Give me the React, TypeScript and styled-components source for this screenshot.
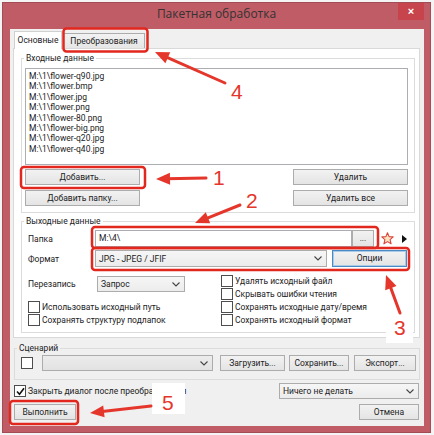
import React from 'react';
import styled, { createGlobalStyle } from 'styled-components';

const GlobalStyle = createGlobalStyle`
  html, body { margin: 0; padding: 0; background: #f4f4f4; }
  body {
    font-family: Roboto, "Liberation Sans", Arial, sans-serif;
    font-size: 8.5px;
    color: #222;
  }
  * { box-sizing: border-box; }
`;

const Screen = styled.div`
  position: relative;
  width: 434px;
  height: 435px;
  overflow: hidden;
  padding: 2px 0 0 2px;
`;

const Window = styled.div`
  width: 429px;
  height: 431px;
  background: #c05c66;
  border: 1px solid #a44c55;
  display: flex;
  flex-direction: column;
`;

const TitleBar = styled.div`
  height: 26px;
  display: grid;
  grid-template-columns: 1fr auto 1fr;
  align-items: start;
`;

const Title = styled.div`
  grid-column: 2;
  padding-top: 3px;
  font-size: 12px;
  line-height: 15px;
  color: #333;
  font-family: "Open Sans", "Noto Sans", sans-serif;
`;

const CloseButton = styled.div`
  grid-column: 3;
  justify-self: end;
  margin-right: 6px;
  width: 26px;
  height: 17px;
  background: #c7444d;
  color: #fff;
  font: bold 11px/16px "Liberation Sans", Arial, sans-serif;
  text-align: center;
`;

const Client = styled.div`
  flex: 1;
  margin: 0 6px 6px 7px;
  background: #f0f0f0;
  display: flex;
  flex-direction: column;
`;

const TabStrip = styled.div`
  height: 19px;
  display: flex;
  align-items: flex-end;
  padding-left: 4px;
`;

const Tab = styled.div<{ $active?: boolean; $width: number }>`
  width: ${p => p.$width}px;
  height: ${p => (p.$active ? 18 : 15)}px;
  margin-bottom: ${p => (p.$active ? -1 : 0)}px;
  margin-left: ${p => (p.$active ? 0 : 1)}px;
  position: relative;
  z-index: ${p => (p.$active ? 1 : 0)};
  border: 1px solid ${p => (p.$active ? '#d0d0d0' : '#acacac')};
  border-bottom: none;
  background: ${p => (p.$active ? '#fff' : 'linear-gradient(#f2f2f2, #e6e6e6)')};
  text-align: center;
  line-height: ${p => (p.$active ? 16 : 14)}px;
  white-space: nowrap;
`;

const TabPanel = styled.div`
  height: 290px;
  margin: 0 4px 0 3px;
  border: 1px solid #d9d9d9;
  background: #fff;
  padding: 3px 4px 0 7px;
`;

const Group = styled.fieldset<{ $gap?: number; $side?: number }>`
  margin: ${p => p.$gap ?? 0}px ${p => p.$side ?? 0}px 0;
  padding: 0;
  min-width: 0;
  border: 1px solid #dcdcdc;
`;

const GroupTitle = styled.legend`
  margin-left: 2px;
  padding: 0 2px;
  line-height: 12px;
`;

const GroupBody = styled.div<{ $pad: string }>`
  padding: ${p => p.$pad};
`;

const ListBox = styled.div`
  height: 97px;
  border: 1px solid #abadb3;
  padding: 2px 3px;
  line-height: 10.4px;
`;

const ButtonsRow = styled.div`
  margin-top: 4px;
  display: flex;
  justify-content: space-between;
`;

const ButtonColumn = styled.div`
  display: flex;
  flex-direction: column;
  gap: 5px;
`;

const Button = styled.div<{ $width: number; $primary?: boolean; $height?: number; $before?: number }>`
  width: ${p => p.$width}px;
  height: ${p => p.$height ?? 16}px;
  margin-left: ${p => p.$before ?? 0}px;
  flex: none;
  border: 1px solid ${p => (p.$primary ? '#4a8ac4' : '#acacac')};
  box-shadow: ${p => (p.$primary ? 'inset 0 0 0 1px #a9cbe8' : 'none')};
  background: linear-gradient(#f2f2f2, #e4e4e4);
  text-align: center;
  line-height: ${p => (p.$height ?? 16) - 2}px;
  white-space: nowrap;
`;

const FieldRow = styled.div<{ $top?: number }>`
  height: 17px;
  margin-top: ${p => p.$top ?? 0}px;
  display: flex;
  align-items: center;
`;

const FieldLabel = styled.div<{ $width: number }>`
  width: ${p => p.$width}px;
  flex: none;
`;

const TextInput = styled.div<{ $width: number }>`
  width: ${p => p.$width}px;
  height: 17px;
  border: 1px solid #abadb3;
  background: #fff;
  padding-left: 3px;
  line-height: 15px;
`;

const SelectBox = styled.div<{ $width: number; $height?: number; $muted?: boolean; $before?: number }>`
  width: ${p => p.$width}px;
  height: ${p => p.$height ?? 16}px;
  margin-left: ${p => p.$before ?? 0}px;
  flex: none;
  border: 1px solid #acacac;
  background: ${p => (p.$muted ? 'linear-gradient(#ececec, #e2e2e2)' : 'linear-gradient(#f6f6f6, #ececec)')};
  display: flex;
  align-items: center;
  justify-content: space-between;
  padding: 0 4px 0 3px;
  white-space: nowrap;
`;

const StarSlot = styled.div`
  margin-left: 7px;
  width: 13px;
  height: 13px;
  display: flex;
`;

const MenuArrow = styled.div`
  margin-left: auto;
  width: 0;
  height: 0;
  border-top: 4px solid transparent;
  border-bottom: 4px solid transparent;
  border-left: 5px solid #111;
  margin-right: 1px;
`;

const OptionsArea = styled.div`
  margin-top: 7px;
  display: flex;
`;

const OptionsColumn = styled.div<{ $width?: number }>`
  width: ${p => (p.$width ? `${p.$width}px` : 'auto')};
  flex: ${p => (p.$width ? 'none' : '1')};
  display: flex;
  flex-direction: column;
`;

const OverwriteRow = styled.div`
  height: 26px;
  display: flex;
  align-items: flex-start;
  padding-top: 2px;
`;

const OverwriteLabel = styled.div`
  width: 69px;
  line-height: 16px;
`;

const CheckRow = styled.div`
  height: 13px;
  display: flex;
  align-items: center;
  white-space: nowrap;
`;

const Box = styled.div`
  width: 12px;
  height: 12px;
  flex: none;
  border: 1px solid #4d4d4d;
  background: #fff;
  margin-right: 2px;
  display: flex;
  align-items: center;
  justify-content: center;
`;

const ScenarioRow = styled.div`
  height: 16px;
  display: flex;
  align-items: center;
`;

const FooterRow = styled.div<{ $top: number }>`
  height: 16px;
  margin-top: ${p => p.$top}px;
  padding: 0 5px 0 4px;
  display: flex;
  align-items: center;
  justify-content: space-between;
`;

const Overlay = styled.svg`
  position: absolute;
  left: 0;
  top: 0;
  pointer-events: none;
`;

const Mark = styled.text`
  font-family: "Liberation Sans", Arial, sans-serif;
  font-size: 21px;
  fill: #e5362b;
`;

const Chevron = () => (
  <svg width="8" height="5" viewBox="0 0 8 5">
    <path d="M0.5 0.5 L4 4 L7.5 0.5" fill="none" stroke="#444" strokeWidth="1.1" />
  </svg>
);

const Star = () => (
  <svg width="13" height="13" viewBox="0 0 13 13">
    <path
      d="M6.5 0.8 L8.1 4.6 L12.2 4.9 L9.1 7.6 L10.1 11.8 L6.5 9.6 L2.9 11.8 L3.9 7.6 L0.8 4.9 L4.9 4.6 Z"
      fill="#fde3c2"
      stroke="#d8453c"
      strokeWidth="1.1"
      strokeLinejoin="round"
    />
  </svg>
);

const Check = ({ checked, label }: { checked?: boolean; label: string }) => (
  <CheckRow>
    <Box>
      {checked && (
        <svg width="9" height="9" viewBox="0 0 9 9">
          <path d="M1 4.5 L3.5 7.2 L8 1.2" fill="none" stroke="#111" strokeWidth="1.6" />
        </svg>
      )}
    </Box>
    {label}
  </CheckRow>
);

const files = [
  'M:\\1\\flower-q90.jpg',
  'M:\\1\\flower.bmp',
  'M:\\1\\flower.jpg',
  'M:\\1\\flower.png',
  'M:\\1\\flower-80.png',
  'M:\\1\\flower-big.png',
  'M:\\1\\flower-q20.jpg',
  'M:\\1\\flower-q40.jpg',
];

type Arrow = { tip: [number, number]; tail: [number, number] };

const arrows: Arrow[] = [
  { tip: [155, 52], tail: [225, 83] },
  { tip: [156, 179], tail: [206, 178] },
  { tip: [195, 223], tail: [240, 205] },
  { tip: [386, 275], tail: [400, 313] },
  { tip: [90, 413], tail: [151, 406] },
];

const frames = [
  { x: 63.5, y: 28.5, w: 84, h: 23 },
  { x: 21, y: 167, w: 124, h: 21 },
  { x: 92, y: 227, w: 286, h: 21 },
  { x: 92, y: 248, w: 317, h: 22 },
  { x: 10, y: 401, w: 68, h: 23 },
];

function arrowHead({ tip, tail }: Arrow) {
  const dx = tip[0] - tail[0];
  const dy = tip[1] - tail[1];
  const len = Math.hypot(dx, dy);
  const ux = dx / len;
  const uy = dy / len;
  const bx = tip[0] - ux * 14;
  const by = tip[1] - uy * 14;
  const px = -uy * 6;
  const py = ux * 6;
  return {
    points: `${tip[0]},${tip[1]} ${bx + px},${by + py} ${bx - px},${by - py}`,
    neck: [tip[0] - ux * 10, tip[1] - uy * 10],
  };
}

export default function App() {
  return (
    <Screen>
      <GlobalStyle />
      <Window>
        <TitleBar>
          <Title>Пакетная обработка</Title>
          <CloseButton>×</CloseButton>
        </TitleBar>
        <Client>
          <TabStrip>
            <Tab $active $width={48}>Основные</Tab>
            <Tab $width={82}>Преобразования</Tab>
          </TabStrip>
          <TabPanel>
            <Group>
              <GroupTitle>Входные данные</GroupTitle>
              <GroupBody $pad="4px 6px 6px 3px">
                <ListBox>
                  {files.map(f => (
                    <div key={f}>{f}</div>
                  ))}
                </ListBox>
                <ButtonsRow>
                  <ButtonColumn>
                    <Button $width={115}>Добавить...</Button>
                    <Button $width={115}>Добавить папку...</Button>
                  </ButtonColumn>
                  <ButtonColumn>
                    <Button $width={115}>Удалить</Button>
                    <Button $width={115}>Удалить все</Button>
                  </ButtonColumn>
                </ButtonsRow>
              </GroupBody>
            </Group>
            <Group $gap={2}>
              <GroupTitle>Выходные данные</GroupTitle>
              <GroupBody $pad="3px 6px 6px 6px">
                <FieldRow>
                  <FieldLabel $width={67}>Папка</FieldLabel>
                  <TextInput $width={257}>M:\4\</TextInput>
                  <Button $width={22} $height={17}>...</Button>
                  <StarSlot>
                    <Star />
                  </StarSlot>
                  <MenuArrow />
                </FieldRow>
                <FieldRow $top={3}>
                  <FieldLabel $width={67}>Формат</FieldLabel>
                  <SelectBox $width={232} $height={17}>
                    JPG - JPEG / JFIF
                    <Chevron />
                  </SelectBox>
                  <Button $width={75} $height={17} $before={5} $primary>Опции</Button>
                </FieldRow>
                <OptionsArea>
                  <OptionsColumn $width={193}>
                    <OverwriteRow>
                      <OverwriteLabel>Перезапись</OverwriteLabel>
                      <SelectBox $width={88}>
                        Запрос
                        <Chevron />
                      </SelectBox>
                    </OverwriteRow>
                    <Check label="Использовать исходный путь" />
                    <Check label="Сохранять структуру подлапок" />
                  </OptionsColumn>
                  <OptionsColumn>
                    <Check label="Удалять исходный файл" />
                    <Check label="Скрывать ошибки чтения" />
                    <Check label="Сохранять исходные дату/время" />
                    <Check label="Сохранять исходный формат" />
                  </OptionsColumn>
                </OptionsArea>
              </GroupBody>
            </Group>
          </TabPanel>
          <Group $gap={4} $side={4}>
            <GroupTitle>Сценарий</GroupTitle>
            <GroupBody $pad="1px 3px 8px 6px">
              <ScenarioRow>
                <Box />
                <SelectBox $width={171} $before={7} $muted>
                  <span />
                  <Chevron />
                </SelectBox>
                <Button $width={65} $before={7}>Загрузить...</Button>
                <Button $width={60} $before={4}>Сохранить...</Button>
                <Button $width={62} $before={5}>Экспорт...</Button>
              </ScenarioRow>
            </GroupBody>
          </Group>
          <FooterRow $top={3}>
            <Check checked label="Закрыть диалог после преобразования" />
            <SelectBox $width={140}>
              Ничего не делать
              <Chevron />
            </SelectBox>
          </FooterRow>
          <FooterRow $top={5}>
            <Button $width={62}>Выполнить</Button>
            <Button $width={60}>Отмена</Button>
          </FooterRow>
        </Client>
      </Window>

      <Overlay width="434" height="435" viewBox="0 0 434 435">
        <rect x="152" y="383" width="33" height="31" fill="#fff" />
        <rect x="386" y="313" width="27" height="30" fill="#fff" />
        {frames.map((f, i) => (
          <rect
            key={i}
            x={f.x}
            y={f.y}
            width={f.w}
            height={f.h}
            rx="3"
            fill="none"
            stroke="#e2271e"
            strokeWidth="2.5"
          />
        ))}
        {arrows.map((a, i) => {
          const head = arrowHead(a);
          return (
            <g key={i}>
              <line
                x1={a.tail[0]}
                y1={a.tail[1]}
                x2={head.neck[0]}
                y2={head.neck[1]}
                stroke="#e5362b"
                strokeWidth="3"
                strokeLinecap="round"
              />
              <polygon points={head.points} fill="#e5362b" />
            </g>
          );
        })}
        <Mark x="231" y="99">4</Mark>
        <Mark x="213" y="185">1</Mark>
        <Mark x="246" y="208">2</Mark>
        <Mark x="394" y="335">3</Mark>
        <Mark x="162" y="410">5</Mark>
      </Overlay>
    </Screen>
  );
}
